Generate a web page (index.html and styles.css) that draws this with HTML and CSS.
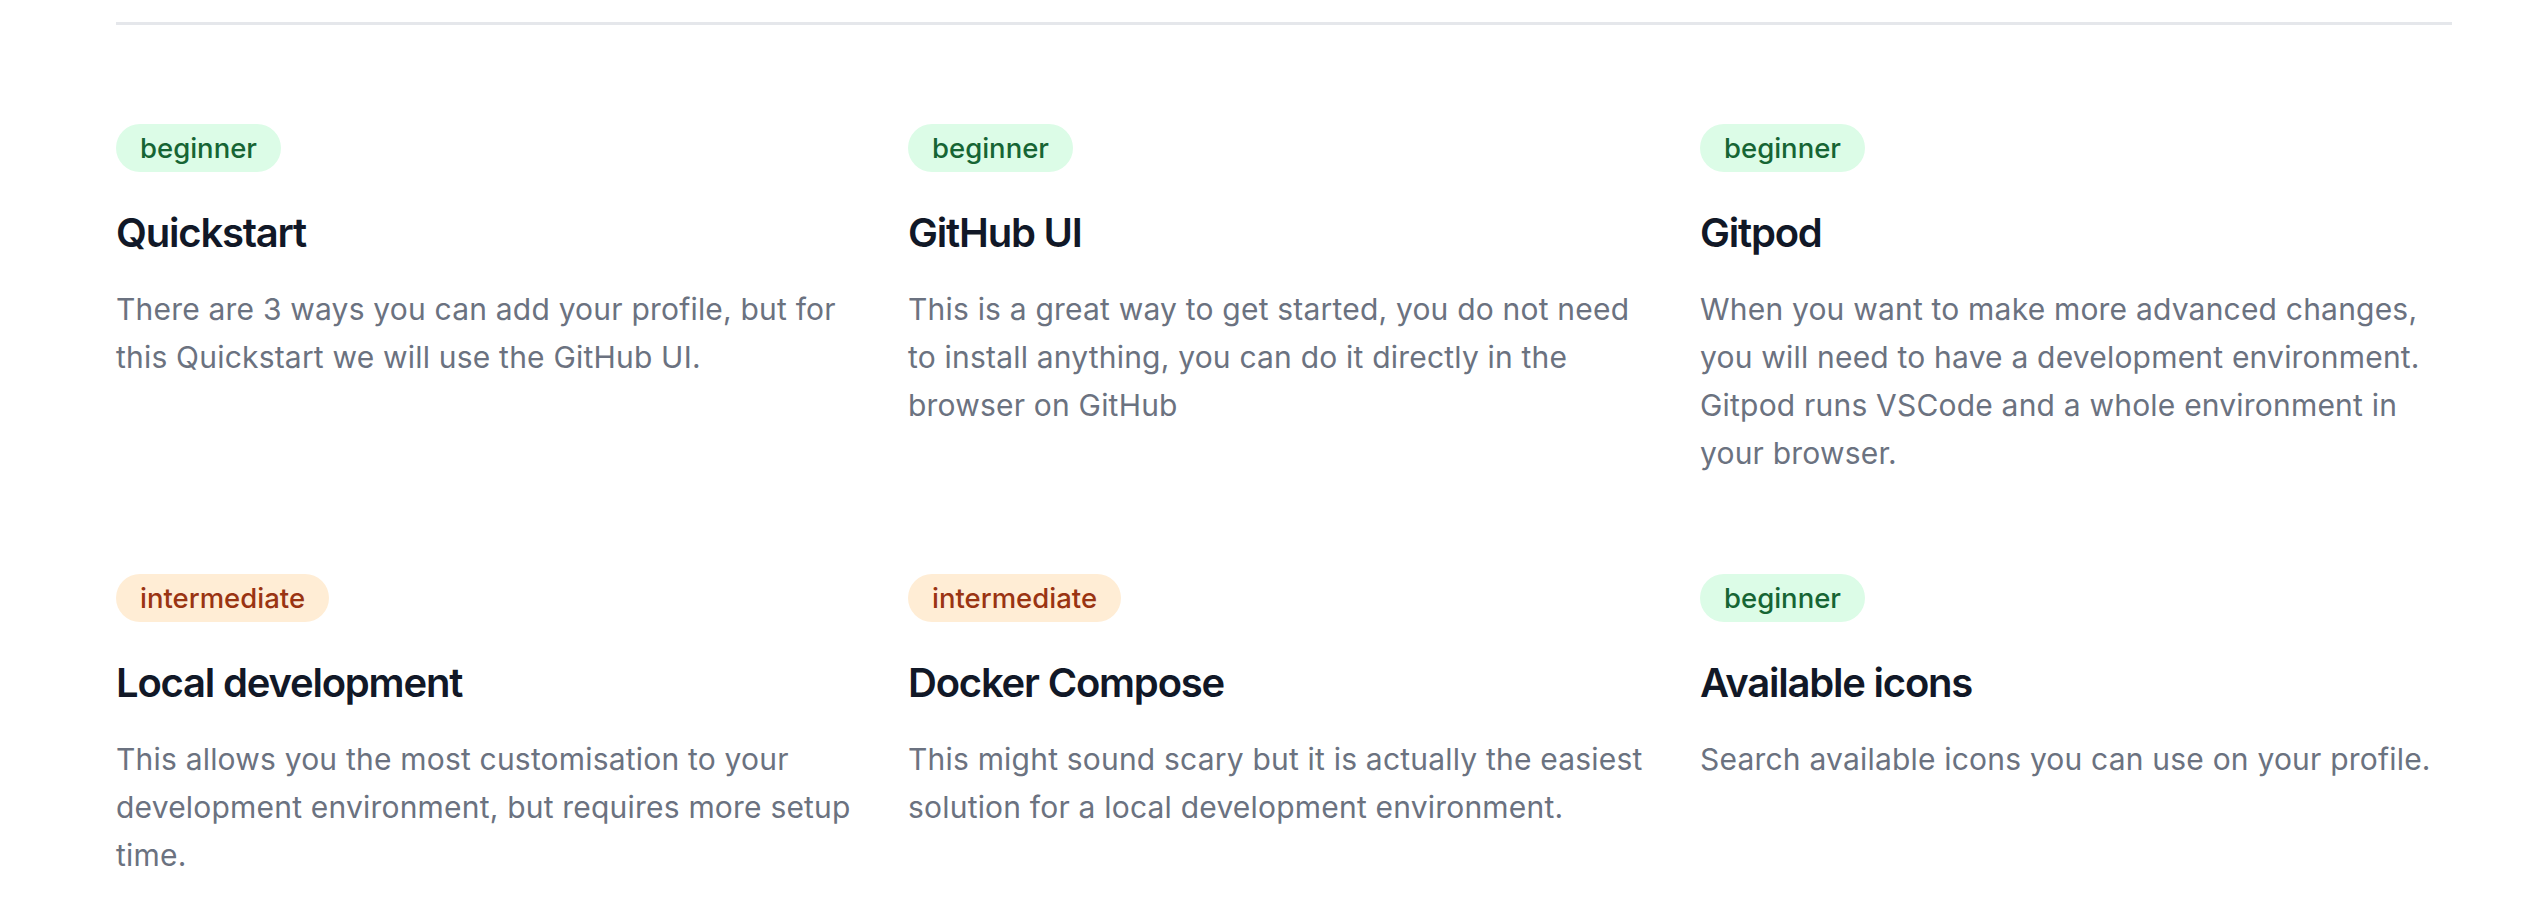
FILE: index.html
```html
<!DOCTYPE html>
<html lang="en">
<head>
<meta charset="utf-8">
<title>Docs</title>
<link rel="stylesheet" href="styles.css">
</head>
<body>
<main class="page">
  <hr class="divider">
  <section class="grid">
    <article class="card">
      <span class="badge badge-beginner">beginner</span>
      <h3 class="card-title">Quickstart</h3>
      <p class="card-text">There are 3 ways you can add your profile, but for this Quickstart we will use the GitHub UI.</p>
    </article>
    <article class="card">
      <span class="badge badge-beginner">beginner</span>
      <h3 class="card-title">GitHub UI</h3>
      <p class="card-text">This is a great way to get started, you do not need to install anything, you can do it directly in the browser on GitHub</p>
    </article>
    <article class="card">
      <span class="badge badge-beginner">beginner</span>
      <h3 class="card-title">Gitpod</h3>
      <p class="card-text">When you want to make more advanced changes, you will need to have a development environment. Gitpod runs VSCode and a whole environment in your browser.</p>
    </article>
    <article class="card">
      <span class="badge badge-intermediate">intermediate</span>
      <h3 class="card-title">Local development</h3>
      <p class="card-text">This allows you the most customisation to your development environment, but requires more setup time.</p>
    </article>
    <article class="card">
      <span class="badge badge-intermediate">intermediate</span>
      <h3 class="card-title">Docker Compose</h3>
      <p class="card-text">This might sound scary but it is actually the easiest solution for a local development environment.</p>
    </article>
    <article class="card">
      <span class="badge badge-beginner">beginner</span>
      <h3 class="card-title">Available icons</h3>
      <p class="card-text">Search available icons you can use on your profile.</p>
    </article>
  </section>
</main>
</body>
</html>
```

FILE: styles.css
```css
html, body {
  margin: 0;
  padding: 0;
  background: #ffffff;
}

body {
  font-family: Inter, "Noto Sans", "Liberation Sans", sans-serif;
}

.page {
  width: 2336px;
  margin-left: 116px;
  padding-top: 22px;
}

.divider {
  margin: 0;
  border: 0;
  height: 3px;
  background: #e5e7eb;
}

.grid {
  display: grid;
  grid-template-columns: repeat(3, 752px);
  column-gap: 40px;
  row-gap: 97px;
  margin-top: 99px;
}

.card {
  display: flex;
  flex-direction: column;
  align-items: flex-start;
}

.badge {
  display: inline-block;
  height: 48px;
  line-height: 48px;
  padding: 0 24px;
  border-radius: 9999px;
  font-size: 27.5px;
  font-weight: 500;
}

.badge-beginner {
  background: #dcfce7;
  color: #166534;
}

.badge-intermediate {
  background: #ffedd5;
  color: #9a3412;
}

.card-title {
  margin: 33px 0 0;
  font-size: 40px;
  line-height: 55px;
  font-weight: 600;
  letter-spacing: -1.2px;
  color: #111827;
}

.card-text {
  margin: 25px 0 0;
  font-size: 30px;
  line-height: 48px;
  letter-spacing: 0.2px;
  color: #6b7280;
}
```
